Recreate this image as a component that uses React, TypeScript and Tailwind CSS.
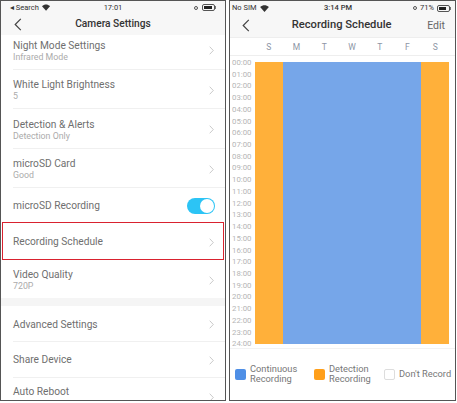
import React from 'react';

const settingsTop = [
  { title: 'Night Mode Settings', sub: 'Infrared Mode', h: 'h-[34px]', pad: 'pb-[3px]' },
  { title: 'White Light Brightness', sub: '5', h: 'h-[38px]', pad: 'pt-[2px]' },
  { title: 'Detection & Alerts', sub: 'Detection Only', h: 'h-[39px]', pad: 'pt-[2px]' },
  { title: 'microSD Card', sub: 'Good', h: 'h-[38px]', pad: 'pt-[2px]' },
];

const days = ['S', 'M', 'T', 'W', 'T', 'F', 'S'];
const hours = Array.from({ length: 25 }, (_, i) => `${String(i).padStart(2, '0')}:00`);

const Chevron = () => (
  <svg width="5" height="9" viewBox="0 0 5 9" fill="none" className="shrink-0">
    <path d="M.7.7l3.6 3.8L.7 8.3" stroke="#c4c4c4" strokeWidth="0.9" />
  </svg>
);

const Back = () => (
  <svg width="8" height="13" viewBox="0 0 8 13" fill="none">
    <path d="M6.8.8L1.2 6.5l5.6 5.7" stroke="#444" strokeWidth="1.2" />
  </svg>
);

const Wifi = () => (
  <svg width="9" height="7" viewBox="0 0 10 8">
    <path d="M5 8L0 2.4C3-.6 7-.6 10 2.4z" fill="#333" />
  </svg>
);

const Battery = ({ level }: { level: string }) => (
  <div className="flex items-center">
    <div className="flex h-[7px] w-[13px] items-stretch rounded-[2px] border border-[#555] p-[1px]">
      <div className={`${level} bg-[#222]`} />
    </div>
    <div className="h-[3px] w-[1px] bg-[#777]" />
  </div>
);

const Row = ({ title, sub, h, pad }: { title: string; sub: string; h: string; pad: string }) => (
  <div className={`flex ${h} items-center pr-[11px] ${pad}`}>
    <div className="flex-1">
      <div className="text-[10.2px] leading-[13px] text-[#6f6f6f]">{title}</div>
      <div className="text-[8.8px] leading-[11px] text-[#ababab]">{sub}</div>
    </div>
    <Chevron />
  </div>
);

const Divider = () => <div className="h-px bg-[#f0f0f0]" />;

const Legend = ({ color, className, textSize, children }: { color: string; className: string; textSize: string; children: React.ReactNode }) => (
  <div className={`flex items-center gap-[4px] ${className}`}>
    <div className={`h-[11px] w-[11px] shrink-0 rounded-[2px] ${color}`} />
    <div className={`${textSize} leading-[10px] text-[#777]`}>{children}</div>
  </div>
);

export default function App() {
  return (
    <div className="flex h-[403px] w-[457px] gap-[3px] bg-white font-['Roboto',sans-serif]">
      {/* Camera Settings */}
      <div className="flex h-[401px] w-[226px] flex-col overflow-hidden border border-[#555]">
        <div className="h-[34px] shrink-0 bg-[#f7f7f7]">
          <div className="flex h-[12px] items-center justify-between px-[9px] pt-[1px] text-[7.5px] text-[#333]">
            <div className="flex w-[40px] items-center gap-[3px] whitespace-nowrap">◂ Search <Wifi /></div>
            <div>17:01</div>
            <div className="flex w-[40px] items-center justify-end gap-[4px]">
              <div className="h-[4px] w-[4px] rounded-full border border-[#555]" />
              <Battery level="w-[8px]" />
            </div>
          </div>
          <div className="flex h-[22px] items-center pl-[13px]">
            <Back />
            <div className="flex-1 pr-[21px] text-center text-[10.2px] font-medium text-[#333]">Camera Settings</div>
          </div>
        </div>
        <div className="pl-[12px]">
          {settingsTop.map((row) => (
            <div key={row.title}>
              <Row {...row} />
              <Divider />
            </div>
          ))}
          <div className="flex h-[34px] items-center pr-[10px] pt-[2px]">
            <div className="flex-1 text-[10.2px] text-[#6f6f6f]">microSD Recording</div>
            <div className="flex h-[16px] w-[28px] items-center justify-end rounded-full bg-[#2cc4f5] pr-[1px]">
              <div className="h-[14px] w-[14px] rounded-full bg-white" />
            </div>
          </div>
        </div>
        <div className="mx-[1px] flex h-[38px] items-center border border-[#d9222f] pl-[10px] pr-[9px] pt-[2px]">
          <div className="flex-1 text-[10.2px] text-[#6f6f6f]">Recording Schedule</div>
          <Chevron />
        </div>
        <div className="pl-[12px]">
          <Row title="Video Quality" sub="720P" h="h-[38px]" pad="pt-[2px]" />
        </div>
        <div className="h-[8px] shrink-0 bg-[#f5f5f5]" />
        <div className="pl-[12px]">
          <div className="flex h-[35px] items-center pr-[11px] pt-[2px]">
            <div className="flex-1 text-[10.2px] text-[#6f6f6f]">Advanced Settings</div>
            <Chevron />
          </div>
          <Divider />
          <div className="flex h-[35px] items-center pr-[11px] pt-[1px]">
            <div className="flex-1 text-[10.2px] text-[#6f6f6f]">Share Device</div>
            <Chevron />
          </div>
          <Divider />
          <div className="flex h-[22px] items-start pr-[11px] pt-[7px]">
            <div className="flex-1 text-[10.2px] leading-[13px] text-[#6f6f6f]">Auto Reboot</div>
            <div className="pt-[8px]"><Chevron /></div>
          </div>
        </div>
      </div>

      {/* Recording Schedule */}
      <div className="flex h-[401px] w-[227px] flex-col overflow-hidden border border-[#555]">
        <div className="h-[37px] shrink-0 border-b border-[#eeeeee] bg-[#f7f7f7]">
          <div className="flex h-[13px] items-center justify-between pl-[2px] pr-[4px] pt-[1px] text-[7.5px] text-[#333]">
            <div className="flex w-[70px] items-center gap-[3px]">No SIM <Wifi /></div>
            <div className="font-medium">3:14 PM</div>
            <div className="flex w-[77px] items-center justify-end gap-[3px]">
              <div className="h-[4px] w-[4px] rounded-full border border-[#555]" />
              <span>71%</span>
              <Battery level="w-[7px]" />
            </div>
          </div>
          <div className="flex h-[23px] items-center pl-[12px] pr-[10px]">
            <Back />
            <div className="flex-1 pl-[6px] text-center text-[11.2px] font-medium text-[#333]">Recording Schedule</div>
            <div className="text-[10.5px] text-[#666]">Edit</div>
          </div>
        </div>
        <div className="flex h-[18px] shrink-0 items-center border-b border-[#eeeeee] pl-[25px] pr-[6px] pt-[1px]">
          {days.map((day, i) => (
            <div key={i} className="flex-1 text-center text-[8.5px] text-[#8d95a5]">{day}</div>
          ))}
        </div>
        <div className="flex h-[293px] shrink-0 border-b border-[#f2f2f2] pt-[6px]">
          <div className="-mt-[5px] flex w-[25px] shrink-0 flex-col">
            {hours.map((hour) => (
              <div key={hour} className="h-[11.72px] pl-[2px] text-[7.8px] leading-[12px] text-[#b5b5b5]">{hour}</div>
            ))}
          </div>
          <div className="mr-[6px] flex h-[281.5px] flex-1">
            <div className="w-[28px] bg-[#ffb03a]" />
            <div className="flex-1 bg-[#76a6e9]" />
            <div className="w-[28px] bg-[#ffb03a]" />
          </div>
        </div>
        <div className="flex flex-1 items-start pl-[5px] pt-[15px]">
          <Legend color="bg-[#4f8fe6]" className="w-[79px]" textSize="text-[9.3px]">Continuous<br />Recording</Legend>
          <Legend color="bg-[#ff9f1a]" className="w-[70px]" textSize="text-[9.3px]">Detection<br />Recording</Legend>
          <div className="flex h-[20px] items-center">
            <Legend color="border border-[#dddddd] bg-white" className="whitespace-nowrap" textSize="text-[9.3px]">Don't Record</Legend>
          </div>
        </div>
      </div>
    </div>
  );
}
